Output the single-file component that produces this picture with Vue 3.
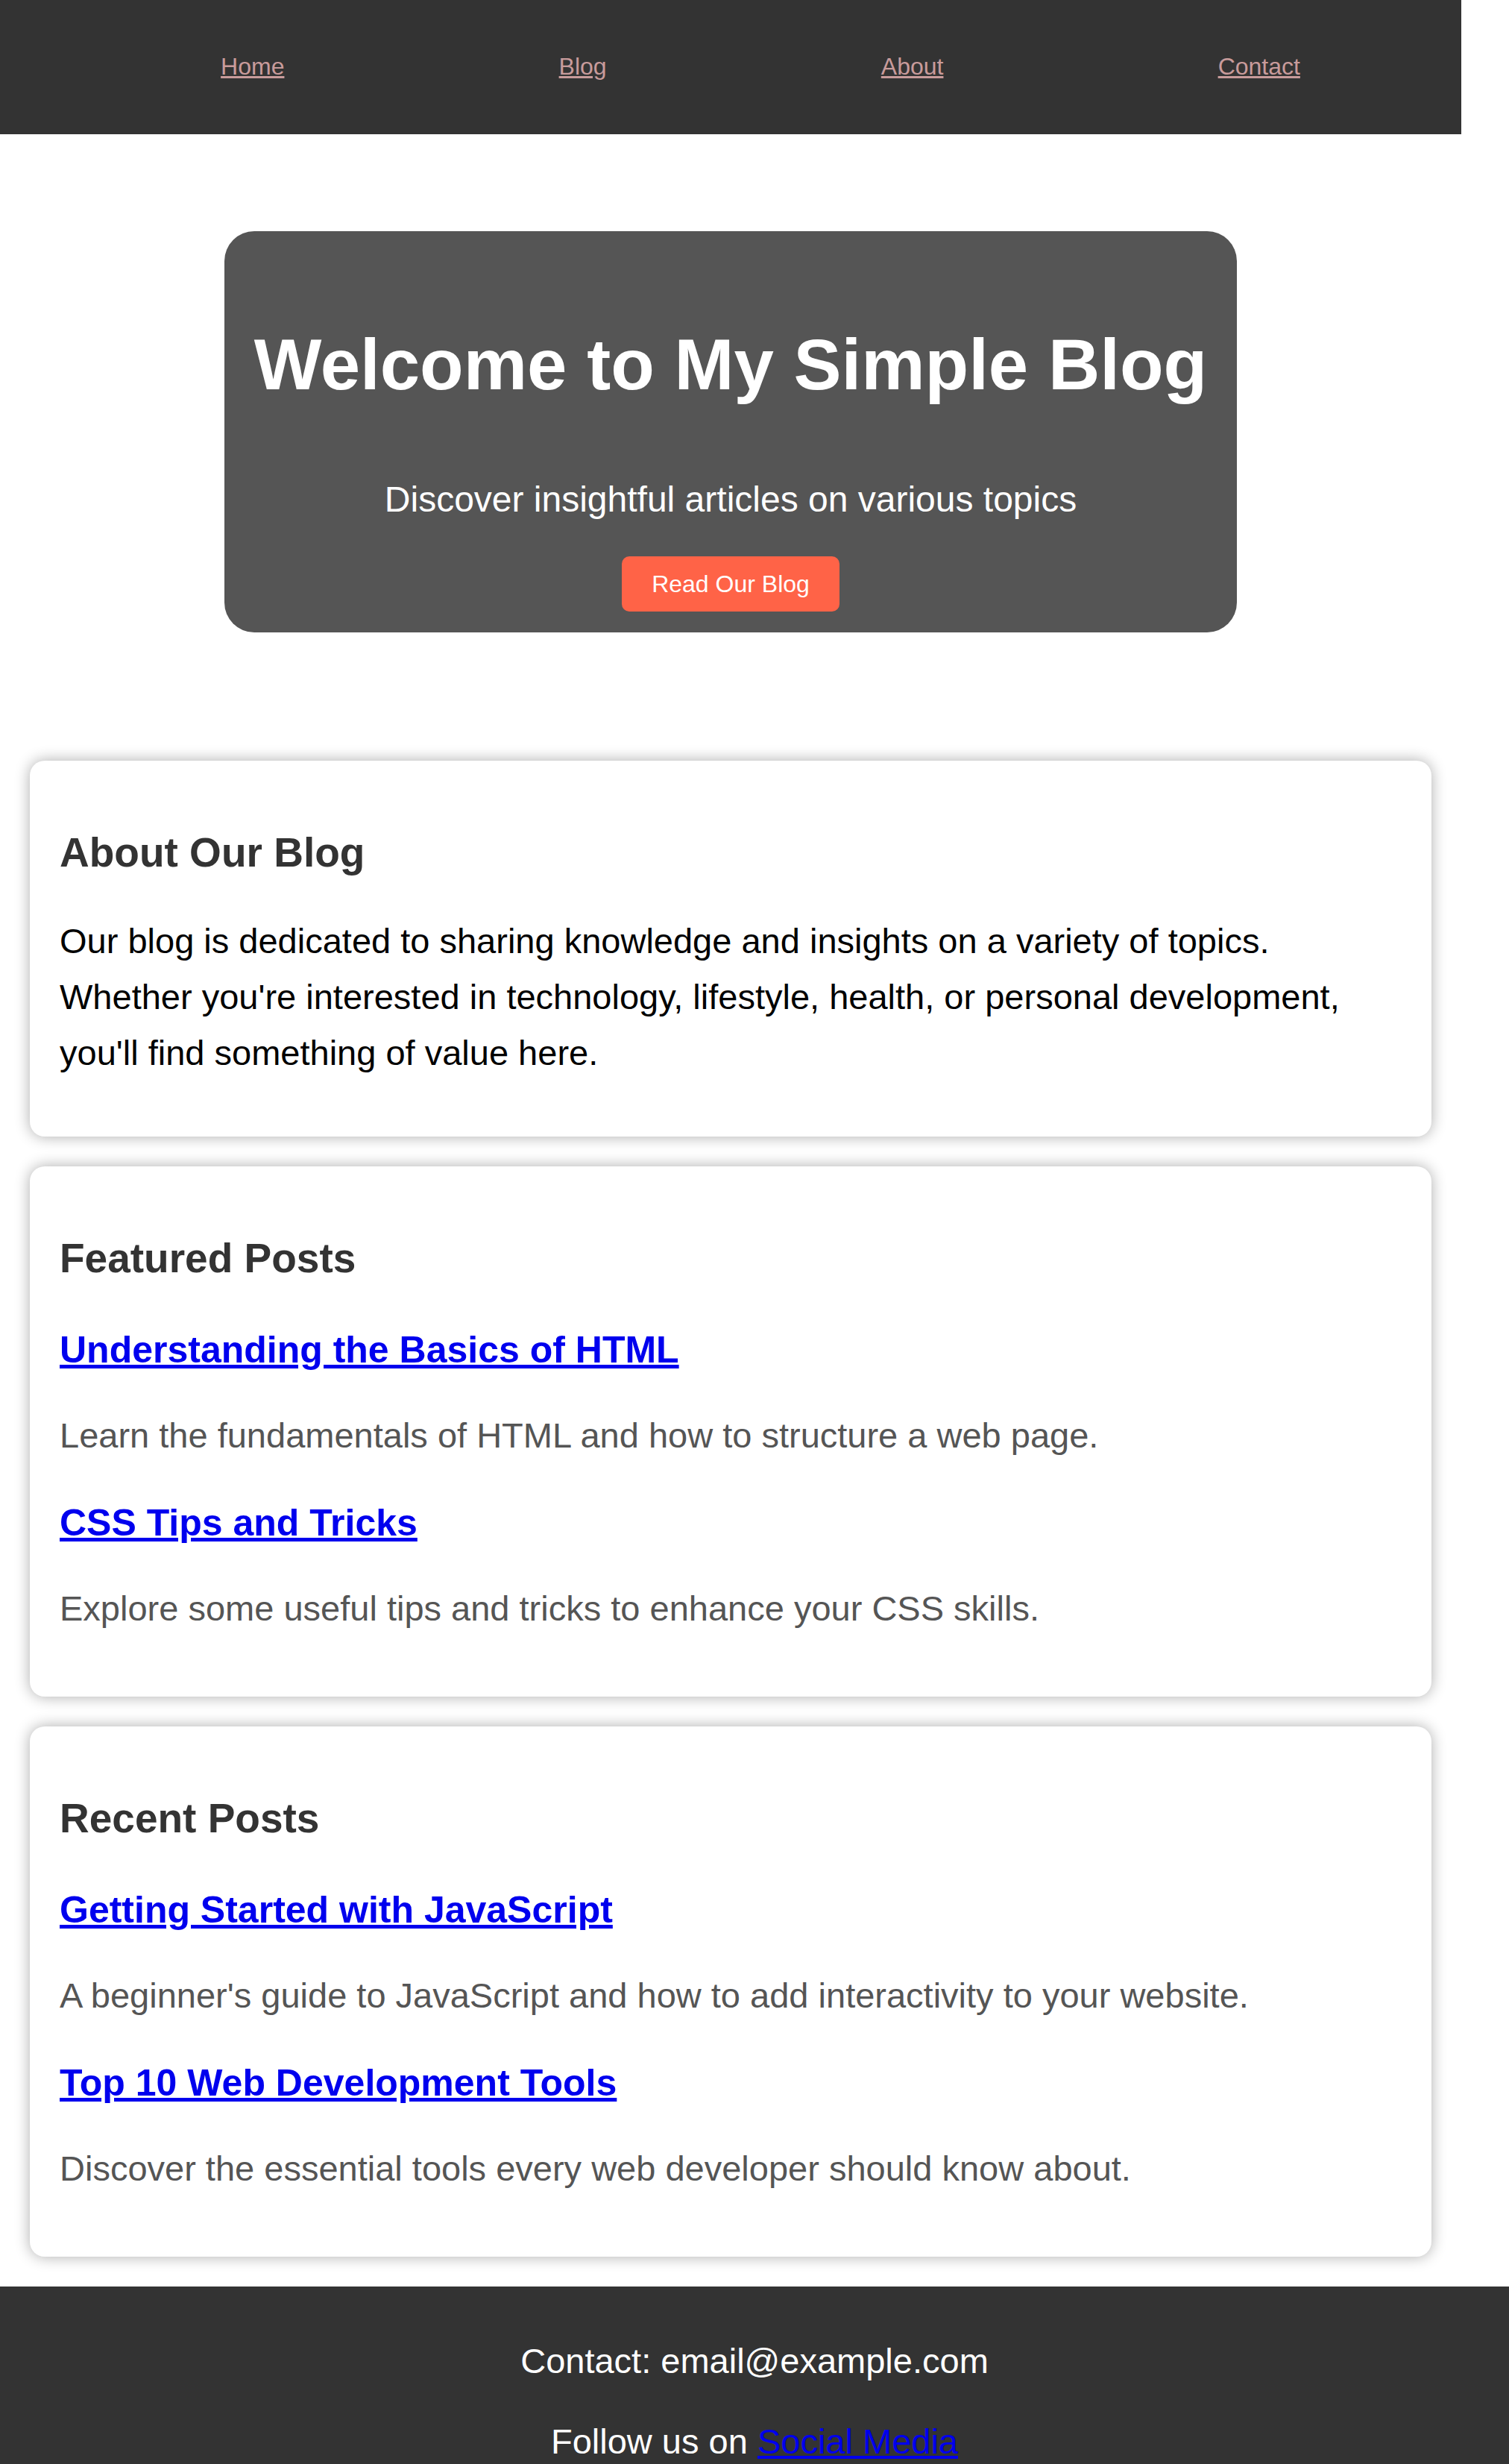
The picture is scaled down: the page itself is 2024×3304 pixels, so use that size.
<script setup>
const links = ['Home', 'Blog', 'About', 'Contact']
const sections = [
  {
    title: 'Featured Posts',
    posts: [
      { title: 'Understanding the Basics of HTML', text: 'Learn the fundamentals of HTML and how to structure a web page.' },
      { title: 'CSS Tips and Tricks', text: 'Explore some useful tips and tricks to enhance your CSS skills.' },
    ],
  },
  {
    title: 'Recent Posts',
    posts: [
      { title: 'Getting Started with JavaScript', text: "A beginner's guide to JavaScript and how to add interactivity to your website." },
      { title: 'Top 10 Web Development Tools', text: 'Discover the essential tools every web developer should know about.' },
    ],
  },
]
</script>

<template>
  <div class="page">
    <div class="content">
      <header>
        <nav>
          <ul>
            <li v-for="link in links" :key="link"><a href="#">{{ link }}</a></li>
          </ul>
        </nav>
      </header>
      <section class="hero">
        <div class="banner">
          <h1>Welcome to My Simple Blog</h1>
          <p>Discover insightful articles on various topics</p>
          <button type="button">Read Our Blog</button>
        </div>
      </section>
      <main>
        <section class="card">
          <h2>About Our Blog</h2>
          <p class="about">Our blog is dedicated to sharing knowledge and insights on a variety of topics. Whether you're interested in technology, lifestyle, health, or personal development, you'll find something of value here.</p>
        </section>
        <section v-for="section in sections" :key="section.title" class="card">
          <h2>{{ section.title }}</h2>
          <article v-for="post in section.posts" :key="post.title">
            <h3><a href="#">{{ post.title }}</a></h3>
            <p>{{ post.text }}</p>
          </article>
        </section>
      </main>
    </div>
    <footer>
      <p>Contact: email@example.com</p>
      <p>Follow us on <a href="#">Social Media</a></p>
    </footer>
  </div>
</template>

<style>
body {
  margin: 0;
  background: #fff;
}
</style>

<style scoped>
.page {
  font-family: "Liberation Sans", Arial, sans-serif;
  font-size: 47px;
  line-height: 75px;
  color: #000;
}
.content {
  margin-right: 64px;
}
header {
  background: #333;
  padding: 63px 32px 65px 112px;
}
ul {
  display: flex;
  justify-content: space-around;
  margin: 0;
  padding: 0;
  list-style: none;
  font-size: 32px;
  line-height: 52px;
}
nav a {
  color: #c89b9b;
}
.hero {
  padding: 130px 40px 172px;
}
.banner {
  width: fit-content;
  box-sizing: border-box;
  margin: 0 auto;
  padding: 100px 40px 28px;
  border-radius: 40px;
  background: #555;
  color: #fff;
  text-align: center;
}
h1 {
  margin: 0 0 64px;
  font-size: 96px;
  line-height: 158px;
}
.banner p {
  margin: 0 0 39px;
  font-size: 48px;
}
button {
  display: block;
  margin: 0 auto;
  padding: 20px 40px;
  border: 0;
  border-radius: 10px;
  background: #ff6347;
  color: #fff;
  font-family: inherit;
  font-size: 32px;
  line-height: 34px;
}
main {
  display: flex;
  flex-direction: column;
  gap: 40px;
  padding: 0 40px 40px;
}
.card {
  padding: 79px 40px 75px;
  border-radius: 20px;
  box-shadow: 0 0 20px rgba(0, 0, 0, 0.33);
}
h2 {
  margin: 0 0 37px;
  color: #333;
  font-size: 55px;
  line-height: 88px;
}
article {
  padding: 2px 0 6px;
}
article + article {
  margin-top: 32px;
}
h3 {
  margin: 0 0 37px;
  font-size: 50px;
  line-height: 80px;
}
.card p {
  margin: 0;
  color: #555;
}
.card .about {
  color: #000;
}
a {
  color: #00e;
}
footer {
  display: flex;
  flex-direction: column;
  gap: 47px;
  padding: 69px 40px 0;
  background: #333;
  color: #fff;
  line-height: 61px;
  text-align: center;
}
footer p {
  margin: 0;
}
</style>
